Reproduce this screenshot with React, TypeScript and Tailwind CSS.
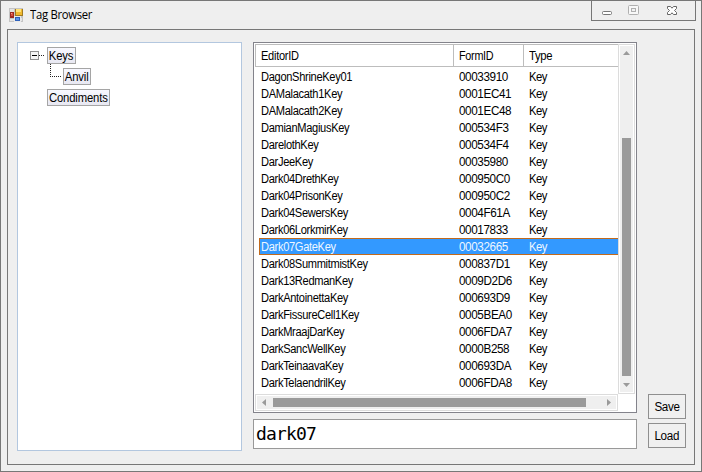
import React from "react";

type Item = { name: string; id: string; selected?: boolean };

const items: Item[] = [
  { name: "DagonShrineKey01", id: "00033910" },
  { name: "DAMalacath1Key", id: "0001EC41" },
  { name: "DAMalacath2Key", id: "0001EC48" },
  { name: "DamianMagiusKey", id: "000534F3" },
  { name: "DarelothKey", id: "000534F4" },
  { name: "DarJeeKey", id: "00035980" },
  { name: "Dark04DrethKey", id: "000950C0" },
  { name: "Dark04PrisonKey", id: "000950C2" },
  { name: "Dark04SewersKey", id: "0004F61A" },
  { name: "Dark06LorkmirKey", id: "00017833" },
  { name: "Dark07GateKey", id: "00032665", selected: true },
  { name: "Dark08SummitmistKey", id: "000837D1" },
  { name: "Dark13RedmanKey", id: "0009D2D6" },
  { name: "DarkAntoinettaKey", id: "000693D9" },
  { name: "DarkFissureCell1Key", id: "0005BEA0" },
  { name: "DarkMraajDarKey", id: "0006FDA7" },
  { name: "DarkSancWellKey", id: "0000B258" },
  { name: "DarkTeinaavaKey", id: "000693DA" },
  { name: "DarkTelaendrilKey", id: "0006FDA8" },
];

function AppIcon() {
  return (
    <svg width="14" height="14" viewBox="0 0 14 14" shapeRendering="crispEdges" className="shrink-0">
      <rect x="0" y="0" width="14" height="14" fill="#c4c4c4" />
      <rect x="1" y="1" width="4" height="3" fill="#e4e4e4" />
      <rect x="1" y="11" width="4" height="2" fill="#e4e4e4" />
      <rect x="12" y="10" width="1" height="3" fill="#e4e4e4" />
      <rect x="1" y="4" width="4" height="6" fill="#9c2a22" />
      <rect x="2" y="5" width="2" height="3" fill="#d9503f" />
      <rect x="2" y="5" width="1" height="1" fill="#f3a090" />
      <rect x="6" y="1" width="8" height="7" fill="#a07a22" />
      <rect x="7" y="1" width="6" height="6" fill="#f0b92e" />
      <rect x="7" y="1" width="5" height="3" fill="#ffe27a" />
      <rect x="5" y="8" width="7" height="6" fill="#e8e8e8" />
      <rect x="6" y="9" width="5" height="4" fill="#2f62bb" />
      <rect x="7" y="10" width="3" height="2" fill="#5b93e8" />
    </svg>
  );
}

function WindowButtons() {
  return (
    <div className="-mt-px h-[21px] w-[105px] border border-[#777]">
      <svg width="103" height="19" viewBox="0 0 103 19" fill="none" className="block">
        <rect x="10.5" y="10.5" width="9" height="3" rx="1" fill="#fff" stroke="#777" />
        <rect x="36.5" y="4.5" width="10" height="9" rx="1" fill="#f8f8f8" stroke="#b0b0b0" />
        <rect x="39.5" y="7.5" width="4" height="3" fill="#f3f3f3" stroke="#b0b0b0" />
        <path
          d="M75.5 5.5h3l1.5 1.7 1.5-1.7h3v2l-2 2 2 2v2h-3L80 11.8l-1.5 1.7h-3v-2l2-2-2-2z"
          fill="#fff"
          stroke="#666"
        />
      </svg>
    </div>
  );
}

function Arrow({ points, w, h }: { points: string; w: number; h: number }) {
  return (
    <svg width={w} height={h} viewBox={`0 0 ${w} ${h}`} className="block shrink-0">
      <polygon points={points} fill="#9a9a9a" />
    </svg>
  );
}

function TreeLabel({ text, size }: { text: string; size: string }) {
  return (
    <span
      className={`flex h-[17px] items-center justify-center border border-[#a5a5a5] bg-gradient-to-b from-[#f8f8ff] to-[#e8e8f2] whitespace-pre ${size}`}
    >
      <span className="scale-x-[0.94]">{text}</span>
    </span>
  );
}

function TagTree() {
  return (
    <div className="h-[409px] w-[225px] border border-[#b3c7df] bg-white pt-[4px] pl-[12px] text-[12px] tracking-[-0.15px]">
      <div className="flex h-[21px]">
        <svg width="17" height="21" viewBox="0 0 17 21" shapeRendering="crispEdges" fill="none">
          <rect x=".5" y="4.5" width="8" height="8" fill="#f5f5f5" stroke="#919191" />
          <path d="M2 8.5h5" stroke="#000" />
          <path d="M9 8.5h5" stroke="#222" strokeDasharray="1 1" />
        </svg>
        <TreeLabel text="Keys" size="w-[29px]" />
      </div>
      <div className="flex h-[21px]">
        <svg width="33" height="21" viewBox="0 0 33 21" shapeRendering="crispEdges" fill="none" className="overflow-visible">
          <path d="M20.5 -4v13M20 8.5h11" stroke="#222" strokeDasharray="1 1" />
        </svg>
        <TreeLabel text="Anvil" size="w-[28px]" />
      </div>
      <div className="flex pl-[17px]">
        <TreeLabel text="Condiments" size="w-[63px]" />
      </div>
    </div>
  );
}

function KeyList() {
  return (
    <div className="h-[371px] w-[384px] border border-[#83838b] bg-white p-px text-[12px] leading-[17px]">
      <div className="flex h-[350px]">
        <div className="w-[363px] overflow-hidden">
          <div className="flex h-[23px] border-t border-b border-l border-[#bdbdbd] leading-[22px] tracking-[-0.3px]">
            <div className="w-[198px] border-r border-[#bdbdbd] pl-[5px]">
              <div className="origin-left scale-x-[0.92]">EditorID</div>
            </div>
            <div className="w-[70px] border-r border-[#bdbdbd] pl-[5px]">
              <div className="origin-left scale-x-[0.9]">FormID</div>
            </div>
            <div className="pl-[5px]">
              <div className="origin-left scale-x-[0.94]">Type</div>
            </div>
          </div>
          <div className="pt-[1px] pl-[4px]">
            {items.map((item) => (
              <div
                key={item.id}
                className={`flex h-[17px] border border-r-0 pl-px leading-[17px] ${
                  item.selected ? "border-[#c26a1c] bg-[#3399ff] text-[#eef7ff]" : "border-transparent"
                }`}
              >
                <span className="w-[198px] origin-left scale-x-[0.925] tracking-[-0.35px]">{item.name}</span>
                <span className="w-[70px] origin-left scale-x-[0.975] tracking-[-0.4px]">{item.id}</span>
                <span className="origin-left scale-x-[0.94] tracking-[-0.6px]">Key</span>
              </div>
            ))}
          </div>
        </div>
        <div className="flex w-[17px] flex-col items-center border border-[#dcdcdc] bg-[#efefef] outline-1 -outline-offset-2 outline-white">
          <div className="h-[93px] pt-[6px]">
            <Arrow points="3.5,0 7,4 0,4" w={7} h={4} />
          </div>
          <div className="h-[238px] w-[9px] bg-[#9a9a9a]" />
          <div className="pt-[7px]">
            <Arrow points="0,0 7,0 3.5,4" w={7} h={4} />
          </div>
        </div>
      </div>
      <div className="flex h-[17px] w-[363px] items-center border border-[#dcdcdc] bg-[#efefef] outline-1 -outline-offset-2 outline-white">
        <div className="w-[17px] pl-[6px]">
          <Arrow points="4,0 4,7 0,3.5" w={4} h={7} />
        </div>
        <div className="h-[9px] w-[313px] bg-[#9a9a9a]" />
        <div className="pl-[21px]">
          <Arrow points="0,0 4,3.5 0,7" w={4} h={7} />
        </div>
      </div>
    </div>
  );
}

function PushButton({ label }: { label: string }) {
  return (
    <button className="block h-[25px] w-[38px] border border-[#8f8f8f] bg-[#f0f0f0] text-center text-[12px] leading-[22px] tracking-[-0.3px]">
      <span className="inline-block scale-x-[0.97]">{label}</span>
    </button>
  );
}

export default function App() {
  return (
    <div className="flex h-[472px] w-[702px] flex-col overflow-hidden border border-[#777] bg-[#efefef] font-['Liberation_Sans',Arial,sans-serif] text-black">
      <div className="flex h-[28px] shrink-0 justify-between pr-[5px]">
        <div className="flex items-start gap-[7px] pt-[7px] pl-[8px]">
          <AppIcon />
          <span className="origin-left scale-x-[0.94] font-['Open_Sans','Noto_Sans',sans-serif] text-[12px] leading-[14px] tracking-[-0.3px]">
            Tag Browser
          </span>
        </div>
        <WindowButtons />
      </div>
      <div className="ml-[6px] flex h-[436px] w-[688px] border border-[#777] pt-[12px] pl-[9px]">
        <TagTree />
        <div className="ml-[11px] flex flex-col gap-[6px]">
          <KeyList />
          <div className="h-[30px] w-[384px] border border-[#999] bg-white pl-[2px] font-['DejaVu_Sans_Mono',monospace] text-[18px] leading-[27px] tracking-[-0.84px]">
            dark07
          </div>
        </div>
        <div className="ml-[11px] flex flex-col gap-[4px] pt-[352px]">
          <PushButton label="Save" />
          <PushButton label="Load" />
        </div>
      </div>
    </div>
  );
}
